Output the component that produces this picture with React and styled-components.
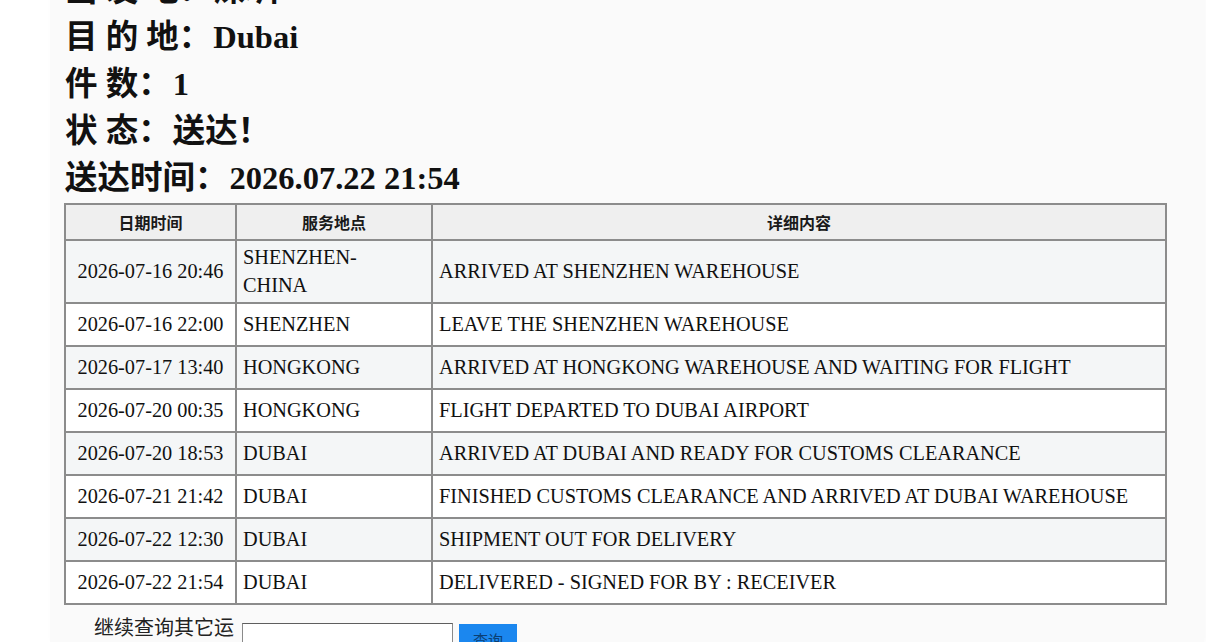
import React from 'react'
import styled, { createGlobalStyle } from 'styled-components'

const GlobalStyle = createGlobalStyle`
    html, body {
        margin: 0;
        padding: 0;
        background: #ffffff;
    }
    body {
        overflow: hidden;
    }
`

const Page = styled.div`
    width: 1206px;
    height: 642px;
    overflow: hidden;
    display: flex;
    justify-content: flex-start;
`

const Sheet = styled.div`
    margin-left: 50px;
    width: 1140px;
    background: #fafafa;
    box-shadow: 2px 0 6px rgba(0, 0, 0, 0.03);
    padding-left: 14px;
    margin-top: -33px;
`

const InfoLine = styled.div`
    font-family: 'Liberation Serif', 'Noto Sans CJK SC', serif;
    font-weight: bold;
    font-size: 32.5px;
    line-height: 47px;
    height: 47px;
    color: #111;
    padding-left: 1px;
    white-space: nowrap;
`

const Value = styled.span`
    margin-left: 2px;
`

const Table = styled.table`
    border-collapse: collapse;
    width: 1103px;
    margin-top: 1px;
    border: 2px solid #7d7d7d;
    table-layout: fixed;
`

const HeadCell = styled.th`
    font-family: 'Noto Sans CJK SC', 'Noto Sans', sans-serif;
    font-weight: bold;
    font-size: 16px;
    color: #1a1a1a;
    background: #efefef;
    border: 2px solid #8c8c8c;
    height: 34px;
    padding: 0;
    text-align: center;
`

const Row = styled.tr`
    background: ${props => (props.shade ? '#f4f6f7' : '#ffffff')};
`

const Cell = styled.td`
    font-family: 'Liberation Serif', serif;
    font-size: 20.3px;
    line-height: 27.5px;
    color: #111;
    border: 2px solid #8c8c8c;
    height: 35px;
    padding: 3px ${props => (props.narrow ? '18px' : '6px')} 3px 6px;
    text-align: ${props => (props.center ? 'center' : 'left')};
    vertical-align: middle;
`

const Form = styled.div`
    display: flex;
    align-items: flex-start;
    padding-left: 30px;
    margin-top: 7px;
`

const Label = styled.div`
    width: 146px;
    font-family: 'Noto Sans CJK SC', sans-serif;
    font-size: 20px;
    line-height: 30px;
    color: #222;
`

const Input = styled.input`
    width: 205px;
    height: 26px;
    margin: 11px 0 0 2px;
    border: 1px solid #8a8a8a;
    border-top-color: #5e5e5e;
    background: #fff;
    padding: 0 2px;
`

const Button = styled.button`
    margin: 12px 0 0 6px;
    width: 58px;
    height: 28px;
    border: none;
    background: #1b87ef;
    color: #0b3f73;
    font-family: 'Noto Sans CJK SC', sans-serif;
    font-size: 15px;
    padding: 4px 0 0;
    line-height: 20px;
`

const info = [
    ['出 发 地：', '深圳'],
    ['目 的 地：', 'Dubai'],
    ['件 数：', '1'],
    ['状 态：', '送达！'],
    ['送达时间：', '2026.07.22 21:54'],
]

const events = [
    ['2026-07-16 20:46', 'SHENZHEN-CHINA', 'ARRIVED AT SHENZHEN WAREHOUSE'],
    ['2026-07-16 22:00', 'SHENZHEN', 'LEAVE THE SHENZHEN WAREHOUSE'],
    ['2026-07-17 13:40', 'HONGKONG', 'ARRIVED AT HONGKONG WAREHOUSE AND WAITING FOR FLIGHT'],
    ['2026-07-20 00:35', 'HONGKONG', 'FLIGHT DEPARTED TO DUBAI AIRPORT'],
    ['2026-07-20 18:53', 'DUBAI', 'ARRIVED AT DUBAI AND READY FOR CUSTOMS CLEARANCE'],
    ['2026-07-21 21:42', 'DUBAI', 'FINISHED CUSTOMS CLEARANCE AND ARRIVED AT DUBAI WAREHOUSE'],
    ['2026-07-22 12:30', 'DUBAI', 'SHIPMENT OUT FOR DELIVERY'],
    ['2026-07-22 21:54', 'DUBAI', 'DELIVERED - SIGNED FOR BY : RECEIVER'],
]

const App = () => (
    <Page>
        <GlobalStyle />
        <Sheet>
            {info.map(([k, v]) => (
                <InfoLine key={k}>
                    {k}
                    <Value>{v}</Value>
                </InfoLine>
            ))}
            <Table>
                <colgroup>
                    <col style={{ width: 171 }} />
                    <col style={{ width: 196 }} />
                    <col />
                </colgroup>
                <thead>
                    <tr>
                        <HeadCell>日期时间</HeadCell>
                        <HeadCell>服务地点</HeadCell>
                        <HeadCell>详细内容</HeadCell>
                    </tr>
                </thead>
                <tbody>
                    {events.map(([time, place, detail], i) => (
                        <Row key={time} shade={i % 2 === 0}>
                            <Cell center>{time}</Cell>
                            <Cell narrow>{place}</Cell>
                            <Cell>{detail}</Cell>
                        </Row>
                    ))}
                </tbody>
            </Table>
            <Form>
                <Label>继续查询其它运单号</Label>
                <Input type="text" />
                <Button>查询</Button>
            </Form>
        </Sheet>
    </Page>
)

export default App
